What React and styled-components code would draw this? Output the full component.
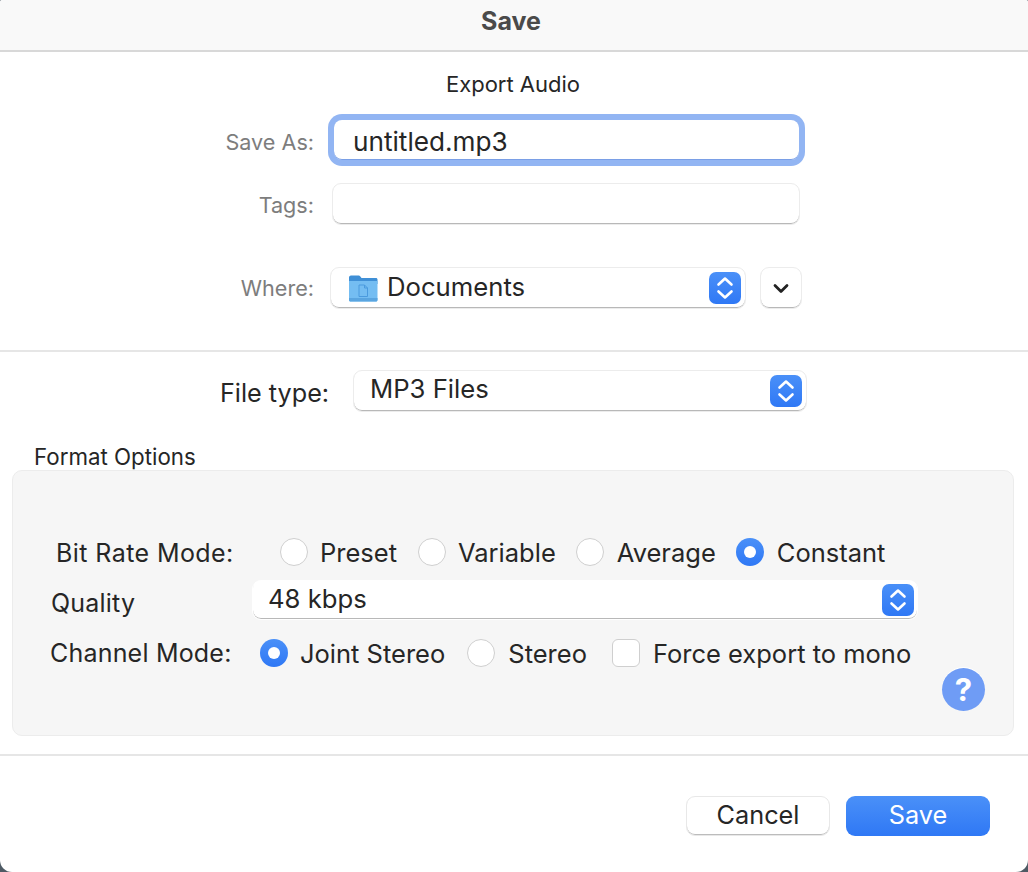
import React from "react";
import styled, { createGlobalStyle } from "styled-components";

const GlobalStyle = createGlobalStyle`
  html, body {
    margin: 0;
    padding: 0;
    background: #4e5a64;
  }
`;

const Window = styled.div`
  width: 1028px;
  height: 872px;
  display: flex;
  flex-direction: column;
  overflow: hidden;
  border-radius: 2px 2px 12px 12px;
  background: #fff;
  color: #262626;
  font-family: Inter, "Liberation Sans", sans-serif;
  font-size: 25.5px;
`;

const TitleBar = styled.div`
  height: 52px;
  flex: none;
  display: flex;
  align-items: center;
  justify-content: center;
  box-sizing: border-box;
  padding: 0 6px 8px 0;
  background: #f9f9f9;
  border-bottom: 2px solid #d8d8d8;
  color: #4a4a4a;
  font-size: 25px;
  font-weight: 700;
`;

const Top = styled.div`
  height: 300px;
  flex: none;
  box-sizing: border-box;
  padding-top: 19px;
  border-bottom: 2px solid #e6e6e6;
`;

const Heading = styled.div`
  text-align: center;
  padding-right: 2px;
  font-size: 22px;
  line-height: 26px;
`;

const FormRow = styled.div`
  display: flex;
  align-items: center;
  margin-top: ${(p) => p.$top}px;
`;

const FormLabel = styled.div`
  width: 314px;
  flex: none;
  box-sizing: border-box;
  padding-top: ${(p) => p.$drop || 0}px;
  text-align: right;
  color: #7d7d7d;
  font-size: 21.6px;
`;

const FocusField = styled.div`
  width: 465px;
  height: 40px;
  margin-left: 20px;
  display: flex;
  align-items: center;
  box-sizing: border-box;
  padding: 2px 0 0 19px;
  border-radius: 8px;
  background: #fff;
  box-shadow: 0 0 0 6px #92b5f3, inset 0 -1px 0 #7a9fe6;
  font-size: 26.2px;
`;

const TagsField = styled.div`
  width: 468px;
  height: 42px;
  margin-left: 18px;
  box-sizing: border-box;
  border: 1px solid #ececec;
  border-radius: 9px;
  background: #fff;
  box-shadow: inset 0 -1px 0 #b8b8b8;
`;

const Popup = styled.div`
  width: ${(p) => p.$width}px;
  height: ${(p) => p.$height || 42}px;
  flex: none;
  margin-left: ${(p) => p.$left || 0}px;
  display: flex;
  align-items: center;
  box-sizing: border-box;
  padding-left: ${(p) => p.$pad}px;
  padding-right: ${(p) => p.$end || 3}px;
  border: 1px solid ${(p) => (p.$bare ? "#fff" : "#ececec")};
  border-radius: 9px;
  background: #fff;
  box-shadow: inset 0 -1px 0 #b8b8b8;
  font-size: 25.7px;
`;

const PopupText = styled.span`
  flex: 1;
  margin-left: ${(p) => p.$left || 0}px;
  margin-bottom: ${(p) => p.$lift || 4}px;
`;

const Stepper = styled.div`
  width: 32px;
  height: 32px;
  flex: none;
  display: flex;
  align-items: center;
  justify-content: center;
  border-radius: 7px;
  background: linear-gradient(#4a90f8, #2f78f5);
`;

const DiscloseButton = styled.div`
  width: 42px;
  height: 42px;
  margin-left: 14px;
  display: flex;
  align-items: center;
  justify-content: center;
  box-sizing: border-box;
  border: 1px solid #ececec;
  border-radius: 9px;
  background: #fff;
  box-shadow: inset 0 -1px 0 #b8b8b8;
`;

const Lower = styled.div`
  flex: 1;
  padding: 18px 14px 0 12px;
  display: flex;
  flex-direction: column;
`;

const FileTypeRow = styled.div`
  display: flex;
  align-items: center;
  padding-left: 208px;
`;

const FileTypeLabel = styled.div`
  width: 109px;
  margin-right: 24px;
  padding-top: 4px;
  font-size: 25.2px;
  white-space: nowrap;
`;

const SectionLabel = styled.div`
  margin: 31px 0 0 22px;
  font-size: 22.3px;
  line-height: 27px;
`;

const Panel = styled.div`
  height: 266px;
  box-sizing: border-box;
  padding-top: 64px;
  background: #f6f6f6;
  border: 1px solid #ececec;
  border-radius: 10px;
`;

const OptionRow = styled.div`
  display: flex;
  align-items: center;
  height: ${(p) => p.$height}px;
  margin-top: ${(p) => p.$top || 0}px;
  padding-left: ${(p) => p.$pad}px;
`;

const RowLabel = styled.div`
  width: ${(p) => p.$width}px;
  flex: none;
  box-sizing: border-box;
  padding-top: ${(p) => p.$drop || 0}px;
  font-size: 25px;
  letter-spacing: ${(p) => p.$track || 0.2}px;
  white-space: nowrap;
`;

const Radio = styled.span`
  width: 28px;
  height: 28px;
  flex: none;
  margin-left: ${(p) => p.$left || 0}px;
  display: flex;
  align-items: center;
  justify-content: center;
  box-sizing: border-box;
  border-radius: 50%;
  background: ${(p) => (p.$on ? "linear-gradient(#4a90f8, #2f78f5)" : "#fff")};
  border: ${(p) => (p.$on ? "none" : "1px solid #cfcfcf")};

  &::after {
    content: "";
    width: 12px;
    height: 12px;
    border-radius: 50%;
    background: #fff;
  }
`;

const Check = styled.span`
  width: 28px;
  height: 28px;
  flex: none;
  margin-left: ${(p) => p.$left || 0}px;
  box-sizing: border-box;
  border-radius: 6px;
  background: #fff;
  border: 1px solid #cfcfcf;
`;

const OptionText = styled.span`
  margin-left: ${(p) => p.$left || 12}px;
  white-space: nowrap;
`;

const HelpRow = styled.div`
  display: flex;
  justify-content: flex-end;
  padding-right: 28px;
  margin-top: 1px;
`;

const HelpButton = styled.div`
  width: 43px;
  height: 43px;
  display: flex;
  align-items: center;
  justify-content: center;
  border-radius: 50%;
  background: #6f9cf5;
  box-shadow: 0 -1px 0 #fff;
  color: #fff;
  font-size: 31px;
  font-weight: 700;
`;

const Footer = styled.div`
  margin: 18px -14px 0 -12px;
  padding: 40px 38px 0 0;
  border-top: 2px solid #e6e6e6;
  display: flex;
  justify-content: flex-end;
  gap: 16px;
`;

const Button = styled.div`
  width: 144px;
  height: 40px;
  display: flex;
  align-items: center;
  justify-content: center;
  box-sizing: border-box;
  padding-bottom: 4px;
  border-radius: 9px;
  font-size: 25.3px;
  color: ${(p) => (p.$primary ? "#fff" : "#262626")};
  background: ${(p) => (p.$primary ? "linear-gradient(#4a90f8, #2f78f5)" : "#fff")};
  border: ${(p) => (p.$primary ? "none" : "1px solid #e8e8e8")};
  box-shadow: ${(p) => (p.$primary ? "none" : "inset 0 -1px 0 #bcbcbc")};
`;

const Chevrons = () => (
  <svg width="22" height="26" viewBox="0 0 22 26" fill="none" stroke="#fff" strokeWidth="2.6" strokeLinecap="round" strokeLinejoin="round">
    <path d="M4.5 9.5 11 3.5l6.5 6" />
    <path d="M4.5 16.5 11 22.5l6.5-6" />
  </svg>
);

const FolderIcon = () => (
  <svg width="30" height="28" viewBox="0 0 30 28">
    <path d="M1 3.5C1 2.5 1.7 1.5 3 1.5h7.5c1 0 1.5.5 2.2 1.5l.8 1H28c.8 0 1.5.7 1.5 1.5V10H1z" fill="#3f8fd6" />
    <path d="M1 7h28.500v19c0 .8-.7 1.500-1.500 1.500H2.500C1.700 27.500 1 26.800 1 26z" fill="#74bdf2" />
    <path d="M1 24h28.500v2c0 .8-.7 1.500-1.500 1.500H2.500C1.700 27.500 1 26.800 1 26z" fill="#5aa5e0" />
    <path d="M11 11h5.500l3 3v8.500H11z M16.500 11v3h3" fill="none" stroke="#4a9ade" strokeWidth="1" />
  </svg>
);

const App = () => {
  return (
    <>
      <GlobalStyle />
      <Window>
        <TitleBar>Save</TitleBar>
        <Top>
          <Heading>Export Audio</Heading>
          <FormRow $top={23}>
            <FormLabel $drop={4}>Save As:</FormLabel>
            <FocusField>untitled.mp3</FocusField>
          </FormRow>
          <FormRow $top={23}>
            <FormLabel $drop={2}>Tags:</FormLabel>
            <TagsField />
          </FormRow>
          <FormRow $top={42}>
            <FormLabel>Where:</FormLabel>
            <Popup $width={416} $left={16} $pad={17} $end={4}>
              <FolderIcon />
              <PopupText $left={9}>Documents</PopupText>
              <Stepper>
                <Chevrons />
              </Stepper>
            </Popup>
            <DiscloseButton>
              <svg width="16" height="11" viewBox="0 0 16 11" fill="none" stroke="#222" strokeWidth="2.800" strokeLinecap="round" strokeLinejoin="round">
                <path d="M2 2.500 8 8.500l6-6" />
              </svg>
            </DiscloseButton>
          </FormRow>
        </Top>
        <Lower>
          <FileTypeRow>
            <FileTypeLabel>File type:</FileTypeLabel>
            <Popup $width={454} $pad={16} $end={4}>
              <PopupText $lift={6}>MP3 Files</PopupText>
              <Stepper>
                <Chevrons />
              </Stepper>
            </Popup>
          </FileTypeRow>
          <SectionLabel>Format Options</SectionLabel>
          <Panel>
            <OptionRow $height={34} $pad={43}>
              <RowLabel $width={224} $drop={2} $track={0.42}>Bit Rate Mode:</RowLabel>
              <Radio />
              <OptionText>Preset</OptionText>
              <Radio $left={21} />
              <OptionText>Variable</OptionText>
              <Radio $left={20} />
              <OptionText $left={13}>Average</OptionText>
              <Radio $left={20} $on />
              <OptionText $left={13}>Constant</OptionText>
            </OptionRow>
            <OptionRow $height={62} $pad={38}>
              <RowLabel $width={201} $drop={6}>Quality</RowLabel>
              <Popup $width={666} $height={40} $pad={15} $bare>
                <PopupText>48 kbps</PopupText>
                <Stepper>
                  <Chevrons />
                </Stepper>
              </Popup>
            </OptionRow>
            <OptionRow $height={28} $top={8} $pad={37}>
              <RowLabel $width={210}>Channel Mode:</RowLabel>
              <Radio $on />
              <OptionText>Joint Stereo</OptionText>
              <Radio $left={22} />
              <OptionText $left={13}>Stereo</OptionText>
              <Check $left={25} />
              <OptionText $left={13}>Force export to mono</OptionText>
            </OptionRow>
            <HelpRow>
              <HelpButton>?</HelpButton>
            </HelpRow>
          </Panel>
          <Footer>
            <Button>Cancel</Button>
            <Button $primary>Save</Button>
          </Footer>
        </Lower>
      </Window>
    </>
  );
};

export default App;
